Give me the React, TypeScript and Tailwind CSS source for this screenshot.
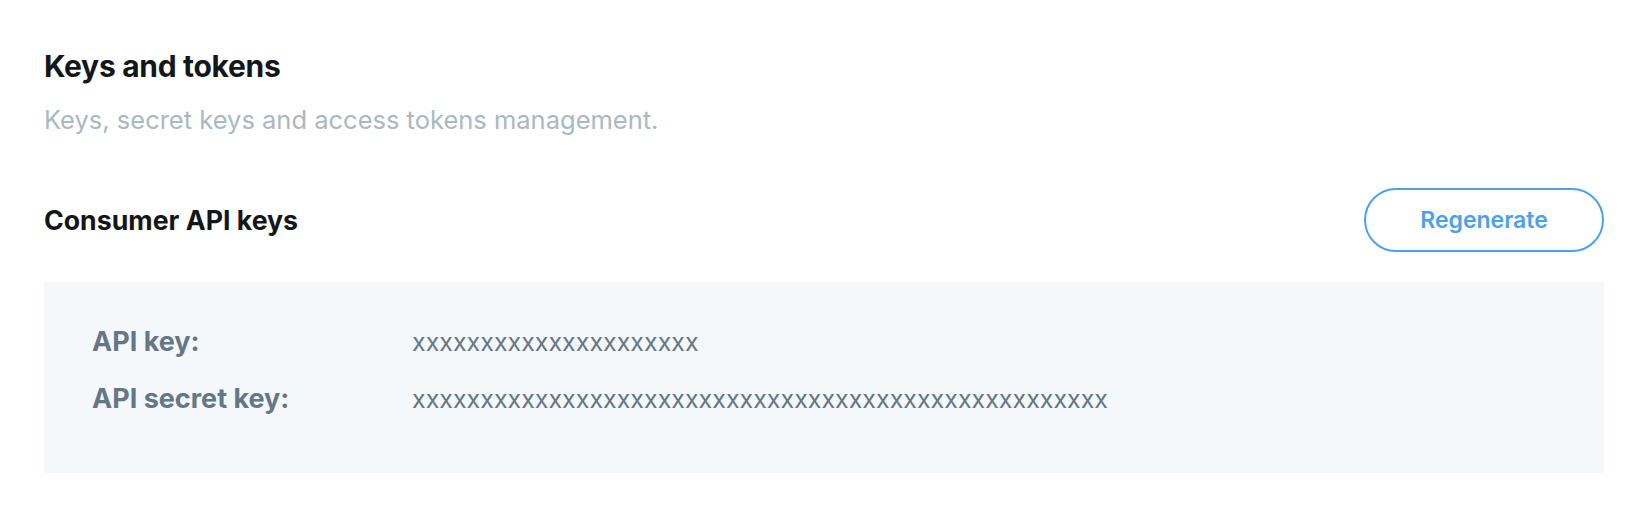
const font = { fontFamily: "Inter, 'Noto Sans', sans-serif" };

const keys = [
  { label: "API key:", value: "x".repeat(21) },
  { label: "API secret key:", value: "x".repeat(51) },
];

export default function App() {
  return (
    <div className="min-h-[515px] bg-white px-[44px] pt-[48px]" style={font}>
      <h1 className="text-[30px] font-bold leading-[36px] tracking-[-0.01em] text-[#14171a]">
        Keys and tokens
      </h1>
      <p className="mt-[20px] text-[25.5px] leading-[32px] text-[#aab8c2]">
        Keys, secret keys and access tokens management.
      </p>

      <div className="mt-[52px] flex items-center justify-between">
        <h2 className="text-[26.7px] font-bold leading-[36px] text-[#14171a]">
          Consumer API keys
        </h2>
        <button className="h-[64px] w-[240px] rounded-full border-2 border-[#4da1eb] text-[23px] font-semibold text-[#4da1eb]">
          Regenerate
        </button>
      </div>

      <div className="mt-[30px] flex flex-col gap-[17px] bg-[#f5f8fa] pb-[54px] pl-[48px] pt-[40px]">
        {keys.map((k) => (
          <div key={k.label} className="flex items-center leading-[40px] text-[#657786]">
            <span className="w-[320px] text-[27px] font-bold">{k.label}</span>
            <span className="text-[25px]">{k.value}</span>
          </div>
        ))}
      </div>
    </div>
  );
}
